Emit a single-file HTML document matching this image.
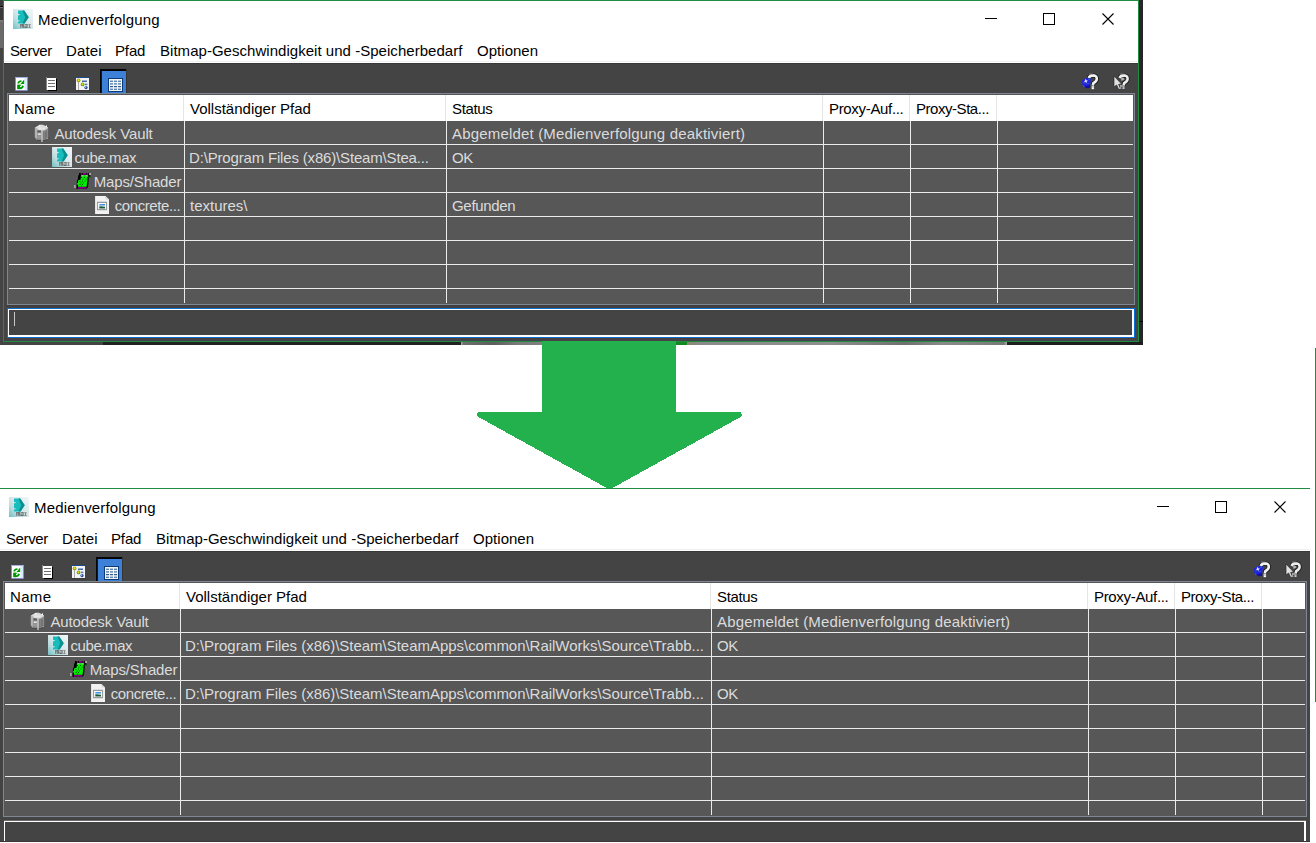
<!DOCTYPE html>
<html><head><meta charset="utf-8"><style>
html,body{margin:0;padding:0;}
body{width:1316px;height:843px;overflow:hidden;position:relative;background:#ffffff;font-family:"Liberation Sans", sans-serif;}
body>div{position:absolute;}
.t{position:absolute;font-size:15px;line-height:20px;white-space:pre;font-family:"Liberation Sans", sans-serif;}
</style></head><body>
<div style="left:0px;top:0px;width:1143px;height:345px;background:#444444;"></div>
<div style="left:0px;top:0px;width:3px;height:6px;background:#3c3c3c;"></div>
<div style="left:0px;top:6px;width:3px;height:1px;background:#0a0a0a;"></div>
<div style="left:0px;top:7px;width:3px;height:1px;background:#6a6a6a;"></div>
<div style="left:0px;top:8px;width:3px;height:12px;background:#3a3a3a;"></div>
<div style="left:0px;top:20px;width:3px;height:2px;background:#7a7a7a;"></div>
<div style="left:0px;top:22px;width:3px;height:26px;background:#6a6a6a;"></div>
<div style="left:1139px;top:0px;width:4px;height:345px;background:#262626;"></div>
<div style="left:1139px;top:321px;width:4px;height:1px;background:#000;"></div>
<div style="left:103px;top:342px;width:358px;height:3px;background:#222222;"></div>
<div style="left:461px;top:342px;width:81px;height:3px;background:linear-gradient(90deg,#b0b0b0 0,#6e6e6e 3%,#5e5e5e 40%,#7a7a7a 70%,#808080 100%);"></div>
<div style="left:676px;top:342px;width:11px;height:3px;background:#0f8a1f;"></div>
<div style="left:687px;top:342px;width:320px;height:3px;background:linear-gradient(90deg,#8a8a6a 0,#8a8a8a 4%,#8e8e8e 45%,#707070 68%,#8a8a8a 80%,#7a7a7a 99%,#b0b0b0 100%);"></div>
<div style="left:1007px;top:342px;width:136px;height:3px;background:#1e1e1e;"></div>
<div style="left:3px;top:0px;width:1136px;height:342px;background:transparent;box-sizing:border-box;border:1px solid #1f8c43"></div>
<div style="left:4px;top:1px;width:1134px;height:62px;background:#ffffff;"></div>
<div style="left:4px;top:61px;width:1134px;height:1px;background:#f0f0f0;"></div>
<div style="left:4px;top:63px;width:1134px;height:1px;background:#383838;"></div>
<div style="left:4px;top:64px;width:1134px;height:277px;background:#444444;"></div>
<svg style="position:absolute;left:13px;top:9px" width="20" height="20" viewBox="0 0 20 20" shape-rendering="auto"><defs><linearGradient id="g1" x1="1" y1="0" x2="0" y2="1">
<stop offset="0" stop-color="#f2f6f8"/><stop offset="0.45" stop-color="#dbe9eb"/><stop offset="0.7" stop-color="#bcdcdf"/><stop offset="1" stop-color="#6fc0c4"/></linearGradient></defs>
<rect x="0" y="0" width="20" height="20" fill="url(#g1)"/>
<path d="M5 1.4H11.2L15.7 8.2L11.6 14.4H5V12.8L7.4 11.7L5 10.9V6.6L7.4 5.6L5 4.7Z" fill="#17bdbc"/>
<path d="M9.5 1.4H11.2L15.7 8.2L11.6 14.4H9.5L12.2 8.2Z" fill="#0c8f8e"/>
<g fill="#5e5e5e"><rect x="7.3" y="15.3" width="3.3" height="0.9"/><rect x="7.3" y="15.3" width="0.9" height="3.5"/><rect x="8.8" y="15.3" width="0.9" height="3.5"/><rect x="10.2" y="15.3" width="0.9" height="3.5"/>
<rect x="11.6" y="15.3" width="2.8" height="0.9"/><rect x="13.6" y="15.3" width="0.9" height="3.5"/><rect x="11.6" y="16.8" width="0.9" height="2"/><rect x="11.6" y="17.9" width="2.8" height="0.9"/></g>
<g fill="#8a8a8a"><rect x="15.2" y="15.3" width="2.6" height="0.9"/><rect x="15.2" y="17.9" width="2.6" height="0.9"/><rect x="16" y="15.3" width="1" height="3.5"/></g></svg>
<svg style="position:absolute;left:15px;top:77px" width="13" height="14" viewBox="0 0 13 14" shape-rendering="auto"><rect x="0.5" y="0.5" width="12" height="13" fill="#d6ebff" stroke="#8080e8" stroke-width="1" stroke-dasharray="1 1"/><rect x="0" y="0" width="13" height="1" fill="#b8d8ff" opacity="0.5"/>
<rect x="1" y="1" width="8.5" height="12" fill="#ffffff"/>
<path d="M2.4 6.4Q2.6 3.4 6.4 3.2L6.6 4.8Q4.4 4.8 4 6.4Z" fill="#009a00"/>
<path d="M9.2 2.4V7H5.4Z" fill="#009a00"/>
<path d="M2.4 7.8H6.4L2.4 12.2Z" fill="#009a00"/><rect x="2.4" y="7.8" width="2.6" height="4.4" fill="#009a00"/>
<path d="M4 10.4Q6.6 10.4 7.4 8.4L8.9 9Q8.2 12.2 4.4 12.2Z" fill="#009a00"/></svg>
<svg style="position:absolute;left:46px;top:77px" width="11" height="14" viewBox="0 0 11 14" shape-rendering="auto"><rect x="2" y="2" width="9" height="12" fill="#000"/>
<rect x="0" y="0" width="1" height="13" fill="#8a8a8a"/>
<rect x="1" y="1" width="9" height="12" fill="#ffffff"/>
<rect x="2" y="3" width="7" height="1" fill="#707070"/><rect x="2" y="6" width="7" height="1" fill="#707070"/><rect x="2" y="9" width="7" height="1" fill="#707070"/></svg>
<svg style="position:absolute;left:75px;top:77px" width="15" height="14" viewBox="0 0 15 14" shape-rendering="auto"><rect x="0" y="0" width="15" height="14" fill="#1a4c8c"/>
<rect x="0" y="13" width="15" height="1" fill="#3a3a3a"/>
<rect x="1" y="1" width="13" height="12" fill="#f4f4f4"/>
<rect x="3" y="5" width="1" height="8" fill="#a8a8a8"/>
<circle cx="3.6" cy="3.4" r="1.9" fill="#9aa018"/><circle cx="3.6" cy="3.2" r="1" fill="#f0e020"/>
<circle cx="7.6" cy="7.4" r="1.9" fill="#5a9a20"/><circle cx="7.5" cy="7.2" r="1" fill="#f0e020"/>
<rect x="7" y="3.6" width="5" height="1.2" fill="#1a4a9a"/>
<rect x="10" y="6.6" width="2.4" height="1.6" fill="#5a7ab0"/>
<circle cx="11" cy="10.6" r="1.6" fill="#1a4aa0"/><circle cx="10.6" cy="10.2" r="0.6" fill="#c8e0ff"/></svg>
<svg style="position:absolute;left:100px;top:69px" width="27" height="24" viewBox="0 0 27 24" shape-rendering="auto"><rect x="0" y="0" width="27" height="24" fill="#3a3530"/>
<rect x="0" y="0" width="26" height="2" fill="#050505"/>
<rect x="0" y="0" width="1.6" height="24" fill="#050505"/>
<rect x="2" y="2" width="24" height="22" fill="#3d80d8"/>
<rect x="8" y="9" width="15" height="14" fill="#0a3a78"/>
<rect x="9" y="10" width="13" height="12" fill="#f6f4f0"/>
<g fill="#5a86b8"><rect x="10" y="11.6" width="3" height="1.4"/><rect x="14" y="11.6" width="3" height="1.4"/><rect x="18" y="11.6" width="3" height="1.4"/>
<rect x="10" y="14.2" width="3" height="1.4"/><rect x="14" y="14.2" width="3" height="1.4"/><rect x="18" y="14.2" width="3" height="1.4"/>
<rect x="10" y="17" width="3" height="1.2" fill="#2a5a98"/><rect x="14" y="17" width="3" height="1.2" fill="#2a5a98"/><rect x="18" y="17" width="3" height="1.2" fill="#2a5a98"/>
<rect x="10" y="19.6" width="3" height="1.4"/><rect x="14" y="19.6" width="3" height="1.4"/><rect x="18" y="19.6" width="3" height="1.4"/></g></svg>
<svg style="position:absolute;left:1080px;top:72px" width="20" height="20" viewBox="0 0 20 20" shape-rendering="auto"><path d="M8.8 6Q9.6 3.4 13 3.4Q17 3.6 16.8 7.2Q16.5 9.6 13.4 11.2L12.8 13.4" stroke="#1a1a1a" stroke-width="4.2" fill="none"/>
<path d="M8.8 6Q9.6 3.4 13 3.4Q17 3.6 16.8 7.2Q16.5 9.6 13.4 11.2L12.8 13.4" stroke="#f2f2f2" stroke-width="2.6" fill="none"/>
<rect x="11.5" y="13.6" width="2.6" height="3.6" fill="#cfcfcf"/><rect x="12" y="15.8" width="1.6" height="1.2" fill="#ffffff"/>
<rect x="9.3" y="1.6" width="4" height="1" fill="#9a9a9a"/>
<path d="M2 8.5L6 6L11 6.6L10 14.8L6.5 16L2.5 13.5Z" fill="#2222e6"/>
<path d="M5 14L10 13L10 15.8L6 16.2Z" fill="#1010a0"/>
<path d="M5.6 6.6L6.4 8.4L8.2 8.8L6.6 9.6L6.4 11.4L5.4 9.8L3.8 9.6L5.2 8.6Z" fill="#ffffff"/>
<circle cx="4" cy="10.8" r="0.6" fill="#18a0a0"/><circle cx="8" cy="11.6" r="0.6" fill="#18a0a0"/><circle cx="3.4" cy="14" r="0.6" fill="#18a0a0"/><circle cx="9" cy="7.2" r="0.6" fill="#18a0a0"/></svg>
<svg style="position:absolute;left:1112px;top:72px" width="20" height="20" viewBox="0 0 20 20" shape-rendering="auto"><path d="M7.6 6Q8.4 3.4 11.8 3.4Q15.8 3.6 15.6 7.2Q15.3 9.6 12.2 11.2L11.6 13.4" stroke="#1a1a1a" stroke-width="4.2" fill="none"/>
<path d="M7.6 6Q8.4 3.4 11.8 3.4Q15.8 3.6 15.6 7.2Q15.3 9.6 12.2 11.2L11.6 13.4" stroke="#ececec" stroke-width="2.6" fill="none"/>
<path d="M9 5.8Q11.5 4.6 12.6 7.2L9.6 9Z" fill="#b4b4b4"/>
<rect x="8.3" y="1.6" width="4" height="1" fill="#9a9a9a"/>
<path d="M2 4L2 15L4.6 13L6.8 17.6L8.6 16.8L6.6 12.4L9.6 12Z" fill="#e2e2e2" stroke="#2a2a2a" stroke-width="0.7"/>
<rect x="8" y="13" width="4.6" height="4" fill="#a0a0a0"/><rect x="9.4" y="14.8" width="1" height="2" fill="#222"/><rect x="10.6" y="15.6" width="1.6" height="1" fill="#ddd"/></svg>
<span class="t" style="left:38px;top:10px;color:#000;letter-spacing:0.160px">Medienverfolgung</span>
<span class="t" style="left:10px;top:41px;color:#000;letter-spacing:-0.400px">Server</span>
<span class="t" style="left:66px;top:41px;color:#000;letter-spacing:0.150px">Datei</span>
<span class="t" style="left:115px;top:41px;color:#000;letter-spacing:-0.133px">Pfad</span>
<span class="t" style="left:160px;top:41px;color:#000;letter-spacing:0.034px">Bitmap-Geschwindigkeit und -Speicherbedarf</span>
<span class="t" style="left:477px;top:41px;color:#000;letter-spacing:0.029px">Optionen</span>
<div style="left:985px;top:18px;width:12px;height:1px;background:#000;"></div>
<div style="left:1043px;top:13px;width:12px;height:12px;background:transparent;box-sizing:border-box;border:1px solid #000"></div>
<svg style="position:absolute;left:1102px;top:13px" width="12" height="12" viewBox="0 0 12 12"><path d="M0.5 0.5L11.5 11.5M11.5 0.5L0.5 11.5" stroke="#000" stroke-width="1.1" fill="none"/></svg>
<div style="left:7px;top:93px;width:1128px;height:212px;background:#555555;box-sizing:border-box;border:1px solid #7f8794"></div>
<div style="left:9px;top:95px;width:1124px;height:26px;background:#ffffff;"></div>
<div style="left:183px;top:95px;width:1px;height:26px;background:#e5e5e5;"></div>
<div style="left:445px;top:95px;width:1px;height:26px;background:#e5e5e5;"></div>
<div style="left:822px;top:95px;width:1px;height:26px;background:#e5e5e5;"></div>
<div style="left:909px;top:95px;width:1px;height:26px;background:#e5e5e5;"></div>
<div style="left:996px;top:95px;width:1px;height:26px;background:#e5e5e5;"></div>
<div style="left:8px;top:121px;width:1126px;height:183px;background:#575757;"></div>
<div style="left:9px;top:144px;width:1124px;height:1px;background:#ebebeb;"></div>
<div style="left:9px;top:168px;width:1124px;height:1px;background:#ebebeb;"></div>
<div style="left:9px;top:192px;width:1124px;height:1px;background:#ebebeb;"></div>
<div style="left:9px;top:216px;width:1124px;height:1px;background:#ebebeb;"></div>
<div style="left:9px;top:240px;width:1124px;height:1px;background:#ebebeb;"></div>
<div style="left:9px;top:264px;width:1124px;height:1px;background:#ebebeb;"></div>
<div style="left:9px;top:288px;width:1124px;height:1px;background:#ebebeb;"></div>
<div style="left:184px;top:121px;width:1px;height:182px;background:#ebebeb;"></div>
<div style="left:446px;top:121px;width:1px;height:182px;background:#ebebeb;"></div>
<div style="left:823px;top:121px;width:1px;height:182px;background:#ebebeb;"></div>
<div style="left:910px;top:121px;width:1px;height:182px;background:#ebebeb;"></div>
<div style="left:997px;top:121px;width:1px;height:182px;background:#ebebeb;"></div>
<span class="t" style="left:14px;top:99px;color:#000;letter-spacing:0.333px">Name</span>
<span class="t" style="left:190px;top:99px;color:#000;letter-spacing:0.000px">Vollständiger Pfad</span>
<span class="t" style="left:452px;top:99px;color:#000;letter-spacing:-0.340px">Status</span>
<span class="t" style="left:829px;top:99px;color:#000;letter-spacing:-0.327px">Proxy-Auf...</span>
<span class="t" style="left:916px;top:99px;color:#000;letter-spacing:-0.455px">Proxy-Sta...</span>
<span class="t" style="left:54.4px;top:124px;color:#dcdcdc;letter-spacing:-0.108px">Autodesk Vault</span>
<span class="t" style="left:452px;top:124px;color:#dcdcdc;letter-spacing:0.175px">Abgemeldet (Medienverfolgung deaktiviert)</span>
<span class="t" style="left:74.4px;top:148px;color:#dcdcdc;letter-spacing:-0.400px">cube.max</span>
<span class="t" style="left:189px;top:148px;color:#dcdcdc;letter-spacing:-0.171px">D:\Program Files (x86)\Steam\Stea...</span>
<span class="t" style="left:452px;top:148px;color:#dcdcdc;letter-spacing:-0.300px">OK</span>
<span class="t" style="left:93.7px;top:172px;color:#dcdcdc;letter-spacing:-0.140px">Maps/Shader</span>
<span class="t" style="left:114.7px;top:196px;color:#dcdcdc;letter-spacing:-0.400px">concrete...</span>
<span class="t" style="left:190px;top:196px;color:#dcdcdc;letter-spacing:0.000px">textures\</span>
<span class="t" style="left:452px;top:196px;color:#dcdcdc;letter-spacing:-0.314px">Gefunden</span>
<svg style="position:absolute;left:33px;top:123px" width="17" height="20" viewBox="0 0 17 20" shape-rendering="auto"><path d="M1 4.6L4 2.6L6.4 1.4H10.2L12.6 2.6L15.8 4.6V14.8L12.8 17.2L4.4 17.4L1.2 15.2Z" fill="#2e2e2e" opacity="0.55"/>
<path d="M1.6 4.8L4.4 3L6.6 1.8H10L12.4 3L15.4 4.8V14.6L12.6 16.8L4.6 17L1.8 15Z" fill="#8a8a8a"/>
<path d="M1.6 4.8L4.4 3L6.6 1.8H10L12.4 3L15.4 4.8L13 6.6L11 7.6H6.4L4 6.4Z" fill="#d8d8d8"/>
<path d="M4.4 4.4H12.2L11 6.4H6Z" fill="#e8e8e8"/>
<rect x="1.8" y="5.2" width="2.4" height="9.6" fill="#b4b4b4"/>
<rect x="4.6" y="7.4" width="3.2" height="2" fill="#5e5e5e"/>
<rect x="4.8" y="10.4" width="3" height="1.4" fill="#f4f4f4"/>
<rect x="4.6" y="12.4" width="3.2" height="3.2" fill="#9a9a9a"/>
<rect x="8.4" y="5.6" width="1.2" height="13.4" fill="#d4d4d4"/>
<rect x="10.2" y="8.4" width="3.8" height="7.6" fill="#747474"/>
<rect x="11.2" y="8.4" width="0.8" height="7.6" fill="#888"/>
<rect x="6.2" y="2" width="1.2" height="1.6" fill="#ffffff"/><rect x="12.8" y="2.4" width="1.2" height="1.6" fill="#ffffff"/>
<rect x="2.8" y="15.4" width="1" height="1" fill="#d0d0d0"/><rect x="13.6" y="15" width="1" height="1" fill="#d0d0d0"/></svg>
<svg style="position:absolute;left:52px;top:147px" width="20" height="20" viewBox="0 0 20 20" shape-rendering="auto"><defs><linearGradient id="g2" x1="1" y1="0" x2="0" y2="1">
<stop offset="0" stop-color="#f2f6f8"/><stop offset="0.45" stop-color="#dbe9eb"/><stop offset="0.7" stop-color="#bcdcdf"/><stop offset="1" stop-color="#6fc0c4"/></linearGradient></defs>
<rect x="0" y="0" width="20" height="20" fill="url(#g2)"/>
<path d="M5 1.4H11.2L15.7 8.2L11.6 14.4H5V12.8L7.4 11.7L5 10.9V6.6L7.4 5.6L5 4.7Z" fill="#17bdbc"/>
<path d="M9.5 1.4H11.2L15.7 8.2L11.6 14.4H9.5L12.2 8.2Z" fill="#0c8f8e"/>
<g fill="#5e5e5e"><rect x="7.3" y="15.3" width="3.3" height="0.9"/><rect x="7.3" y="15.3" width="0.9" height="3.5"/><rect x="8.8" y="15.3" width="0.9" height="3.5"/><rect x="10.2" y="15.3" width="0.9" height="3.5"/>
<rect x="11.6" y="15.3" width="2.8" height="0.9"/><rect x="13.6" y="15.3" width="0.9" height="3.5"/><rect x="11.6" y="16.8" width="0.9" height="2"/><rect x="11.6" y="17.9" width="2.8" height="0.9"/></g>
<g fill="#8a8a8a"><rect x="15.2" y="15.3" width="2.6" height="0.9"/><rect x="15.2" y="17.9" width="2.6" height="0.9"/><rect x="16" y="15.3" width="1" height="3.5"/></g></svg>
<svg style="position:absolute;left:72px;top:171px" width="20" height="20" viewBox="0 0 20 20" shape-rendering="auto"><path d="M7 2H17V4.2L18.6 4.4L18.4 6.4L16.8 6.4L16 16L14.6 17.8H4.4L4.6 15.6L5 9.2L5.8 8.6L6.2 4.2H7Z" fill="#000"/>
<path d="M9 4.1H16.2L15.6 7.2L14.6 15.8H6V9.4L8.6 8.8Z" fill="#00f000"/>
<rect x="8.8" y="2" width="7.4" height="1.9" fill="#8c008c"/><rect x="10" y="2" width="0.8" height="1.9" fill="#000"/><rect x="13.8" y="2" width="0.8" height="1.9" fill="#000"/>
<rect x="6" y="16" width="8.4" height="1.6" fill="#8c008c"/>
<rect x="16.6" y="5.6" width="2" height="1" fill="#00a000"/>
<g fill="#003800" opacity="0.85"><rect x="9" y="6" width="1" height="1"/><rect x="12" y="6" width="1" height="1"/><rect x="15" y="6" width="1" height="1"/><rect x="10.5" y="7.6" width="1" height="1"/><rect x="13.6" y="7.6" width="1" height="1"/><rect x="7.4" y="10" width="1" height="1"/><rect x="10" y="9.6" width="1" height="1"/><rect x="12.6" y="9.6" width="1" height="1"/><rect x="8.6" y="11.6" width="1" height="1"/><rect x="11" y="11.4" width="1" height="1"/><rect x="7.6" y="13" width="1" height="1"/><rect x="10" y="13" width="1" height="1"/><rect x="9" y="14.6" width="1" height="1.2"/></g>
<g fill="#e8c0e8"><rect x="10" y="4.2" width="0.8" height="1"/><rect x="14" y="4.2" width="0.8" height="1"/><rect x="5" y="12.4" width="1" height="1"/></g>
<rect x="2" y="14" width="1.8" height="3" fill="#a0a0a0"/><rect x="17.2" y="2" width="1.8" height="2" fill="#a8a8a8"/></svg>
<svg style="position:absolute;left:95px;top:196px" width="14" height="18" viewBox="0 0 14 18" shape-rendering="auto"><path d="M0 0H10.4L14 3.6V18H0Z" fill="#f2f2f2"/>
<path d="M10.4 0V3.6H14Z" fill="#d8d8d8"/>
<rect x="0" y="0" width="1" height="18" fill="#e4e4e4"/>
<rect x="2.6" y="6.4" width="8.8" height="7.2" fill="none" stroke="#9a9a9a" stroke-width="1.3"/>
<rect x="3.3" y="7" width="7.4" height="6" fill="#ffffff"/>
<rect x="4.4" y="8" width="5.6" height="1.4" fill="#4a90f0"/>
<path d="M4.4 9.6H10V10.6Q7 10.2 4.4 12.4Z" fill="#7ab0b8"/>
<path d="M4.4 10.4Q7 10.4 10 11V12.6H4.4Z" fill="#1e5a3a"/></svg>
<div style="left:7px;top:305px;width:1128px;height:2px;background:#3f3f3f;"></div>
<div style="left:7px;top:307px;width:1128px;height:1px;background:#4a423c;"></div>
<div style="left:4px;top:338px;width:1134px;height:1px;background:#4a4038;"></div>
<div style="left:4px;top:339px;width:1134px;height:2px;background:#47424a;"></div>
<div style="left:7px;top:308px;width:1128px;height:30px;background:#444444;box-sizing:border-box;border:1px solid #0a6ed2"></div>
<div style="left:8px;top:309px;width:1126px;height:28px;background:transparent;box-sizing:border-box;border:1px solid #ffffff;border-bottom-width:2px;border-right-width:2px"></div>
<div style="left:14px;top:312px;width:1px;height:14px;background:#c8c8c8;"></div>
<svg style="position:absolute;left:0;top:0" width="1316" height="843" shape-rendering="crispEdges"><path d="M542 341H676V412H739Q741.6 412.2 741.6 414.2V415.4Q741.6 416.4 740.6 417L610.6 489H608.6L478.4 417Q477 416.4 477 415.2V414.2Q477 412.2 479.4 412H542Z" fill="#22b14c"/></svg>
<div style="left:0px;top:488px;width:1310px;height:1px;background:#1f8c43;"></div>
<div style="left:0px;top:489px;width:1310px;height:62px;background:#ffffff;"></div>
<div style="left:0px;top:549px;width:1310px;height:1px;background:#f0f0f0;"></div>
<div style="left:0px;top:551px;width:1310px;height:1px;background:#383838;"></div>
<div style="left:0px;top:552px;width:1310px;height:290px;background:#444444;"></div>
<svg style="position:absolute;left:9px;top:497px" width="20" height="20" viewBox="0 0 20 20" shape-rendering="auto"><defs><linearGradient id="g3" x1="1" y1="0" x2="0" y2="1">
<stop offset="0" stop-color="#f2f6f8"/><stop offset="0.45" stop-color="#dbe9eb"/><stop offset="0.7" stop-color="#bcdcdf"/><stop offset="1" stop-color="#6fc0c4"/></linearGradient></defs>
<rect x="0" y="0" width="20" height="20" fill="url(#g3)"/>
<path d="M5 1.4H11.2L15.7 8.2L11.6 14.4H5V12.8L7.4 11.7L5 10.9V6.6L7.4 5.6L5 4.7Z" fill="#17bdbc"/>
<path d="M9.5 1.4H11.2L15.7 8.2L11.6 14.4H9.5L12.2 8.2Z" fill="#0c8f8e"/>
<g fill="#5e5e5e"><rect x="7.3" y="15.3" width="3.3" height="0.9"/><rect x="7.3" y="15.3" width="0.9" height="3.5"/><rect x="8.8" y="15.3" width="0.9" height="3.5"/><rect x="10.2" y="15.3" width="0.9" height="3.5"/>
<rect x="11.6" y="15.3" width="2.8" height="0.9"/><rect x="13.6" y="15.3" width="0.9" height="3.5"/><rect x="11.6" y="16.8" width="0.9" height="2"/><rect x="11.6" y="17.9" width="2.8" height="0.9"/></g>
<g fill="#8a8a8a"><rect x="15.2" y="15.3" width="2.6" height="0.9"/><rect x="15.2" y="17.9" width="2.6" height="0.9"/><rect x="16" y="15.3" width="1" height="3.5"/></g></svg>
<svg style="position:absolute;left:11px;top:565px" width="13" height="14" viewBox="0 0 13 14" shape-rendering="auto"><rect x="0.5" y="0.5" width="12" height="13" fill="#d6ebff" stroke="#8080e8" stroke-width="1" stroke-dasharray="1 1"/><rect x="0" y="0" width="13" height="1" fill="#b8d8ff" opacity="0.5"/>
<rect x="1" y="1" width="8.5" height="12" fill="#ffffff"/>
<path d="M2.4 6.4Q2.6 3.4 6.4 3.2L6.6 4.8Q4.4 4.8 4 6.4Z" fill="#009a00"/>
<path d="M9.2 2.4V7H5.4Z" fill="#009a00"/>
<path d="M2.4 7.8H6.4L2.4 12.2Z" fill="#009a00"/><rect x="2.4" y="7.8" width="2.6" height="4.4" fill="#009a00"/>
<path d="M4 10.4Q6.6 10.4 7.4 8.4L8.9 9Q8.2 12.2 4.4 12.2Z" fill="#009a00"/></svg>
<svg style="position:absolute;left:42px;top:565px" width="11" height="14" viewBox="0 0 11 14" shape-rendering="auto"><rect x="2" y="2" width="9" height="12" fill="#000"/>
<rect x="0" y="0" width="1" height="13" fill="#8a8a8a"/>
<rect x="1" y="1" width="9" height="12" fill="#ffffff"/>
<rect x="2" y="3" width="7" height="1" fill="#707070"/><rect x="2" y="6" width="7" height="1" fill="#707070"/><rect x="2" y="9" width="7" height="1" fill="#707070"/></svg>
<svg style="position:absolute;left:71px;top:565px" width="15" height="14" viewBox="0 0 15 14" shape-rendering="auto"><rect x="0" y="0" width="15" height="14" fill="#1a4c8c"/>
<rect x="0" y="13" width="15" height="1" fill="#3a3a3a"/>
<rect x="1" y="1" width="13" height="12" fill="#f4f4f4"/>
<rect x="3" y="5" width="1" height="8" fill="#a8a8a8"/>
<circle cx="3.6" cy="3.4" r="1.9" fill="#9aa018"/><circle cx="3.6" cy="3.2" r="1" fill="#f0e020"/>
<circle cx="7.6" cy="7.4" r="1.9" fill="#5a9a20"/><circle cx="7.5" cy="7.2" r="1" fill="#f0e020"/>
<rect x="7" y="3.6" width="5" height="1.2" fill="#1a4a9a"/>
<rect x="10" y="6.6" width="2.4" height="1.6" fill="#5a7ab0"/>
<circle cx="11" cy="10.6" r="1.6" fill="#1a4aa0"/><circle cx="10.6" cy="10.2" r="0.6" fill="#c8e0ff"/></svg>
<svg style="position:absolute;left:96px;top:557px" width="27" height="24" viewBox="0 0 27 24" shape-rendering="auto"><rect x="0" y="0" width="27" height="24" fill="#3a3530"/>
<rect x="0" y="0" width="26" height="2" fill="#050505"/>
<rect x="0" y="0" width="1.6" height="24" fill="#050505"/>
<rect x="2" y="2" width="24" height="22" fill="#3d80d8"/>
<rect x="8" y="9" width="15" height="14" fill="#0a3a78"/>
<rect x="9" y="10" width="13" height="12" fill="#f6f4f0"/>
<g fill="#5a86b8"><rect x="10" y="11.6" width="3" height="1.4"/><rect x="14" y="11.6" width="3" height="1.4"/><rect x="18" y="11.6" width="3" height="1.4"/>
<rect x="10" y="14.2" width="3" height="1.4"/><rect x="14" y="14.2" width="3" height="1.4"/><rect x="18" y="14.2" width="3" height="1.4"/>
<rect x="10" y="17" width="3" height="1.2" fill="#2a5a98"/><rect x="14" y="17" width="3" height="1.2" fill="#2a5a98"/><rect x="18" y="17" width="3" height="1.2" fill="#2a5a98"/>
<rect x="10" y="19.6" width="3" height="1.4"/><rect x="14" y="19.6" width="3" height="1.4"/><rect x="18" y="19.6" width="3" height="1.4"/></g></svg>
<svg style="position:absolute;left:1252px;top:560px" width="20" height="20" viewBox="0 0 20 20" shape-rendering="auto"><path d="M8.8 6Q9.6 3.4 13 3.4Q17 3.6 16.8 7.2Q16.5 9.6 13.4 11.2L12.8 13.4" stroke="#1a1a1a" stroke-width="4.2" fill="none"/>
<path d="M8.8 6Q9.6 3.4 13 3.4Q17 3.6 16.8 7.2Q16.5 9.6 13.4 11.2L12.8 13.4" stroke="#f2f2f2" stroke-width="2.6" fill="none"/>
<rect x="11.5" y="13.6" width="2.6" height="3.6" fill="#cfcfcf"/><rect x="12" y="15.8" width="1.6" height="1.2" fill="#ffffff"/>
<rect x="9.3" y="1.6" width="4" height="1" fill="#9a9a9a"/>
<path d="M2 8.5L6 6L11 6.6L10 14.8L6.5 16L2.5 13.5Z" fill="#2222e6"/>
<path d="M5 14L10 13L10 15.8L6 16.2Z" fill="#1010a0"/>
<path d="M5.6 6.6L6.4 8.4L8.2 8.8L6.6 9.6L6.4 11.4L5.4 9.8L3.8 9.6L5.2 8.6Z" fill="#ffffff"/>
<circle cx="4" cy="10.8" r="0.6" fill="#18a0a0"/><circle cx="8" cy="11.6" r="0.6" fill="#18a0a0"/><circle cx="3.4" cy="14" r="0.6" fill="#18a0a0"/><circle cx="9" cy="7.2" r="0.6" fill="#18a0a0"/></svg>
<svg style="position:absolute;left:1284px;top:560px" width="20" height="20" viewBox="0 0 20 20" shape-rendering="auto"><path d="M7.6 6Q8.4 3.4 11.8 3.4Q15.8 3.6 15.6 7.2Q15.3 9.6 12.2 11.2L11.6 13.4" stroke="#1a1a1a" stroke-width="4.2" fill="none"/>
<path d="M7.6 6Q8.4 3.4 11.8 3.4Q15.8 3.6 15.6 7.2Q15.3 9.6 12.2 11.2L11.6 13.4" stroke="#ececec" stroke-width="2.6" fill="none"/>
<path d="M9 5.8Q11.5 4.6 12.6 7.2L9.6 9Z" fill="#b4b4b4"/>
<rect x="8.3" y="1.6" width="4" height="1" fill="#9a9a9a"/>
<path d="M2 4L2 15L4.6 13L6.8 17.6L8.6 16.8L6.6 12.4L9.6 12Z" fill="#e2e2e2" stroke="#2a2a2a" stroke-width="0.7"/>
<rect x="8" y="13" width="4.6" height="4" fill="#a0a0a0"/><rect x="9.4" y="14.8" width="1" height="2" fill="#222"/><rect x="10.6" y="15.6" width="1.6" height="1" fill="#ddd"/></svg>
<span class="t" style="left:34px;top:498px;color:#000;letter-spacing:0.160px">Medienverfolgung</span>
<span class="t" style="left:6px;top:529px;color:#000;letter-spacing:-0.400px">Server</span>
<span class="t" style="left:62px;top:529px;color:#000;letter-spacing:0.150px">Datei</span>
<span class="t" style="left:111px;top:529px;color:#000;letter-spacing:-0.133px">Pfad</span>
<span class="t" style="left:156px;top:529px;color:#000;letter-spacing:0.034px">Bitmap-Geschwindigkeit und -Speicherbedarf</span>
<span class="t" style="left:473px;top:529px;color:#000;letter-spacing:0.029px">Optionen</span>
<div style="left:1157px;top:506px;width:12px;height:1px;background:#000;"></div>
<div style="left:1215px;top:501px;width:12px;height:12px;background:transparent;box-sizing:border-box;border:1px solid #000"></div>
<svg style="position:absolute;left:1274px;top:501px" width="12" height="12" viewBox="0 0 12 12"><path d="M0.5 0.5L11.5 11.5M11.5 0.5L0.5 11.5" stroke="#000" stroke-width="1.1" fill="none"/></svg>
<div style="left:3px;top:581px;width:1304px;height:236px;background:#555555;box-sizing:border-box;border:1px solid #7f8794"></div>
<div style="left:5px;top:583px;width:1300px;height:26px;background:#ffffff;"></div>
<div style="left:179px;top:583px;width:1px;height:26px;background:#e5e5e5;"></div>
<div style="left:710px;top:583px;width:1px;height:26px;background:#e5e5e5;"></div>
<div style="left:1087px;top:583px;width:1px;height:26px;background:#e5e5e5;"></div>
<div style="left:1174px;top:583px;width:1px;height:26px;background:#e5e5e5;"></div>
<div style="left:1261px;top:583px;width:1px;height:26px;background:#e5e5e5;"></div>
<div style="left:4px;top:609px;width:1302px;height:207px;background:#575757;"></div>
<div style="left:5px;top:632px;width:1300px;height:1px;background:#ebebeb;"></div>
<div style="left:5px;top:656px;width:1300px;height:1px;background:#ebebeb;"></div>
<div style="left:5px;top:680px;width:1300px;height:1px;background:#ebebeb;"></div>
<div style="left:5px;top:704px;width:1300px;height:1px;background:#ebebeb;"></div>
<div style="left:5px;top:728px;width:1300px;height:1px;background:#ebebeb;"></div>
<div style="left:5px;top:752px;width:1300px;height:1px;background:#ebebeb;"></div>
<div style="left:5px;top:776px;width:1300px;height:1px;background:#ebebeb;"></div>
<div style="left:5px;top:800px;width:1300px;height:1px;background:#ebebeb;"></div>
<div style="left:180px;top:609px;width:1px;height:206px;background:#ebebeb;"></div>
<div style="left:711px;top:609px;width:1px;height:206px;background:#ebebeb;"></div>
<div style="left:1088px;top:609px;width:1px;height:206px;background:#ebebeb;"></div>
<div style="left:1175px;top:609px;width:1px;height:206px;background:#ebebeb;"></div>
<div style="left:1262px;top:609px;width:1px;height:206px;background:#ebebeb;"></div>
<span class="t" style="left:10px;top:587px;color:#000;letter-spacing:0.333px">Name</span>
<span class="t" style="left:186px;top:587px;color:#000;letter-spacing:0.000px">Vollständiger Pfad</span>
<span class="t" style="left:717px;top:587px;color:#000;letter-spacing:-0.340px">Status</span>
<span class="t" style="left:1094px;top:587px;color:#000;letter-spacing:-0.327px">Proxy-Auf...</span>
<span class="t" style="left:1181px;top:587px;color:#000;letter-spacing:-0.455px">Proxy-Sta...</span>
<span class="t" style="left:50.4px;top:612px;color:#dcdcdc;letter-spacing:-0.108px">Autodesk Vault</span>
<span class="t" style="left:717px;top:612px;color:#dcdcdc;letter-spacing:0.175px">Abgemeldet (Medienverfolgung deaktiviert)</span>
<span class="t" style="left:70.4px;top:636px;color:#dcdcdc;letter-spacing:-0.400px">cube.max</span>
<span class="t" style="left:185px;top:636px;color:#dcdcdc;letter-spacing:-0.029px">D:\Program Files (x86)\Steam\SteamApps\common\RailWorks\Source\Trabb...</span>
<span class="t" style="left:717px;top:636px;color:#dcdcdc;letter-spacing:-0.300px">OK</span>
<span class="t" style="left:89.7px;top:660px;color:#dcdcdc;letter-spacing:-0.140px">Maps/Shader</span>
<span class="t" style="left:110.7px;top:684px;color:#dcdcdc;letter-spacing:-0.400px">concrete...</span>
<span class="t" style="left:185px;top:684px;color:#dcdcdc;letter-spacing:-0.029px">D:\Program Files (x86)\Steam\SteamApps\common\RailWorks\Source\Trabb...</span>
<span class="t" style="left:717px;top:684px;color:#dcdcdc;letter-spacing:-0.300px">OK</span>
<svg style="position:absolute;left:29px;top:611px" width="17" height="20" viewBox="0 0 17 20" shape-rendering="auto"><path d="M1 4.6L4 2.6L6.4 1.4H10.2L12.6 2.6L15.8 4.6V14.8L12.8 17.2L4.4 17.4L1.2 15.2Z" fill="#2e2e2e" opacity="0.55"/>
<path d="M1.6 4.8L4.4 3L6.6 1.8H10L12.4 3L15.4 4.8V14.6L12.6 16.8L4.6 17L1.8 15Z" fill="#8a8a8a"/>
<path d="M1.6 4.8L4.4 3L6.6 1.8H10L12.4 3L15.4 4.8L13 6.6L11 7.6H6.4L4 6.4Z" fill="#d8d8d8"/>
<path d="M4.4 4.4H12.2L11 6.4H6Z" fill="#e8e8e8"/>
<rect x="1.8" y="5.2" width="2.4" height="9.6" fill="#b4b4b4"/>
<rect x="4.6" y="7.4" width="3.2" height="2" fill="#5e5e5e"/>
<rect x="4.8" y="10.4" width="3" height="1.4" fill="#f4f4f4"/>
<rect x="4.6" y="12.4" width="3.2" height="3.2" fill="#9a9a9a"/>
<rect x="8.4" y="5.6" width="1.2" height="13.4" fill="#d4d4d4"/>
<rect x="10.2" y="8.4" width="3.8" height="7.6" fill="#747474"/>
<rect x="11.2" y="8.4" width="0.8" height="7.6" fill="#888"/>
<rect x="6.2" y="2" width="1.2" height="1.6" fill="#ffffff"/><rect x="12.8" y="2.4" width="1.2" height="1.6" fill="#ffffff"/>
<rect x="2.8" y="15.4" width="1" height="1" fill="#d0d0d0"/><rect x="13.6" y="15" width="1" height="1" fill="#d0d0d0"/></svg>
<svg style="position:absolute;left:48px;top:635px" width="20" height="20" viewBox="0 0 20 20" shape-rendering="auto"><defs><linearGradient id="g4" x1="1" y1="0" x2="0" y2="1">
<stop offset="0" stop-color="#f2f6f8"/><stop offset="0.45" stop-color="#dbe9eb"/><stop offset="0.7" stop-color="#bcdcdf"/><stop offset="1" stop-color="#6fc0c4"/></linearGradient></defs>
<rect x="0" y="0" width="20" height="20" fill="url(#g4)"/>
<path d="M5 1.4H11.2L15.7 8.2L11.6 14.4H5V12.8L7.4 11.7L5 10.9V6.6L7.4 5.6L5 4.7Z" fill="#17bdbc"/>
<path d="M9.5 1.4H11.2L15.7 8.2L11.6 14.4H9.5L12.2 8.2Z" fill="#0c8f8e"/>
<g fill="#5e5e5e"><rect x="7.3" y="15.3" width="3.3" height="0.9"/><rect x="7.3" y="15.3" width="0.9" height="3.5"/><rect x="8.8" y="15.3" width="0.9" height="3.5"/><rect x="10.2" y="15.3" width="0.9" height="3.5"/>
<rect x="11.6" y="15.3" width="2.8" height="0.9"/><rect x="13.6" y="15.3" width="0.9" height="3.5"/><rect x="11.6" y="16.8" width="0.9" height="2"/><rect x="11.6" y="17.9" width="2.8" height="0.9"/></g>
<g fill="#8a8a8a"><rect x="15.2" y="15.3" width="2.6" height="0.9"/><rect x="15.2" y="17.9" width="2.6" height="0.9"/><rect x="16" y="15.3" width="1" height="3.5"/></g></svg>
<svg style="position:absolute;left:68px;top:659px" width="20" height="20" viewBox="0 0 20 20" shape-rendering="auto"><path d="M7 2H17V4.2L18.6 4.4L18.4 6.4L16.8 6.4L16 16L14.6 17.8H4.4L4.6 15.6L5 9.2L5.8 8.6L6.2 4.2H7Z" fill="#000"/>
<path d="M9 4.1H16.2L15.6 7.2L14.6 15.8H6V9.4L8.6 8.8Z" fill="#00f000"/>
<rect x="8.8" y="2" width="7.4" height="1.9" fill="#8c008c"/><rect x="10" y="2" width="0.8" height="1.9" fill="#000"/><rect x="13.8" y="2" width="0.8" height="1.9" fill="#000"/>
<rect x="6" y="16" width="8.4" height="1.6" fill="#8c008c"/>
<rect x="16.6" y="5.6" width="2" height="1" fill="#00a000"/>
<g fill="#003800" opacity="0.85"><rect x="9" y="6" width="1" height="1"/><rect x="12" y="6" width="1" height="1"/><rect x="15" y="6" width="1" height="1"/><rect x="10.5" y="7.6" width="1" height="1"/><rect x="13.6" y="7.6" width="1" height="1"/><rect x="7.4" y="10" width="1" height="1"/><rect x="10" y="9.6" width="1" height="1"/><rect x="12.6" y="9.6" width="1" height="1"/><rect x="8.6" y="11.6" width="1" height="1"/><rect x="11" y="11.4" width="1" height="1"/><rect x="7.6" y="13" width="1" height="1"/><rect x="10" y="13" width="1" height="1"/><rect x="9" y="14.6" width="1" height="1.2"/></g>
<g fill="#e8c0e8"><rect x="10" y="4.2" width="0.8" height="1"/><rect x="14" y="4.2" width="0.8" height="1"/><rect x="5" y="12.4" width="1" height="1"/></g>
<rect x="2" y="14" width="1.8" height="3" fill="#a0a0a0"/><rect x="17.2" y="2" width="1.8" height="2" fill="#a8a8a8"/></svg>
<svg style="position:absolute;left:91px;top:684px" width="14" height="18" viewBox="0 0 14 18" shape-rendering="auto"><path d="M0 0H10.4L14 3.6V18H0Z" fill="#f2f2f2"/>
<path d="M10.4 0V3.6H14Z" fill="#d8d8d8"/>
<rect x="0" y="0" width="1" height="18" fill="#e4e4e4"/>
<rect x="2.6" y="6.4" width="8.8" height="7.2" fill="none" stroke="#9a9a9a" stroke-width="1.3"/>
<rect x="3.3" y="7" width="7.4" height="6" fill="#ffffff"/>
<rect x="4.4" y="8" width="5.6" height="1.4" fill="#4a90f0"/>
<path d="M4.4 9.6H10V10.6Q7 10.2 4.4 12.4Z" fill="#7ab0b8"/>
<path d="M4.4 10.4Q7 10.4 10 11V12.6H4.4Z" fill="#1e5a3a"/></svg>
<div style="left:4px;top:820px;width:1302px;height:1px;background:#6a6a6a;"></div>
<div style="left:4px;top:821px;width:1302px;height:21px;background:#444444;box-sizing:border-box;border:1px solid #ffffff;border-bottom:none;border-right-width:2px"></div>
<div style="left:0px;top:841px;width:1310px;height:1px;background:#383838;"></div>
<div style="left:1315px;top:348px;width:1px;height:354px;background:#1f8c43;"></div>
</body></html>
